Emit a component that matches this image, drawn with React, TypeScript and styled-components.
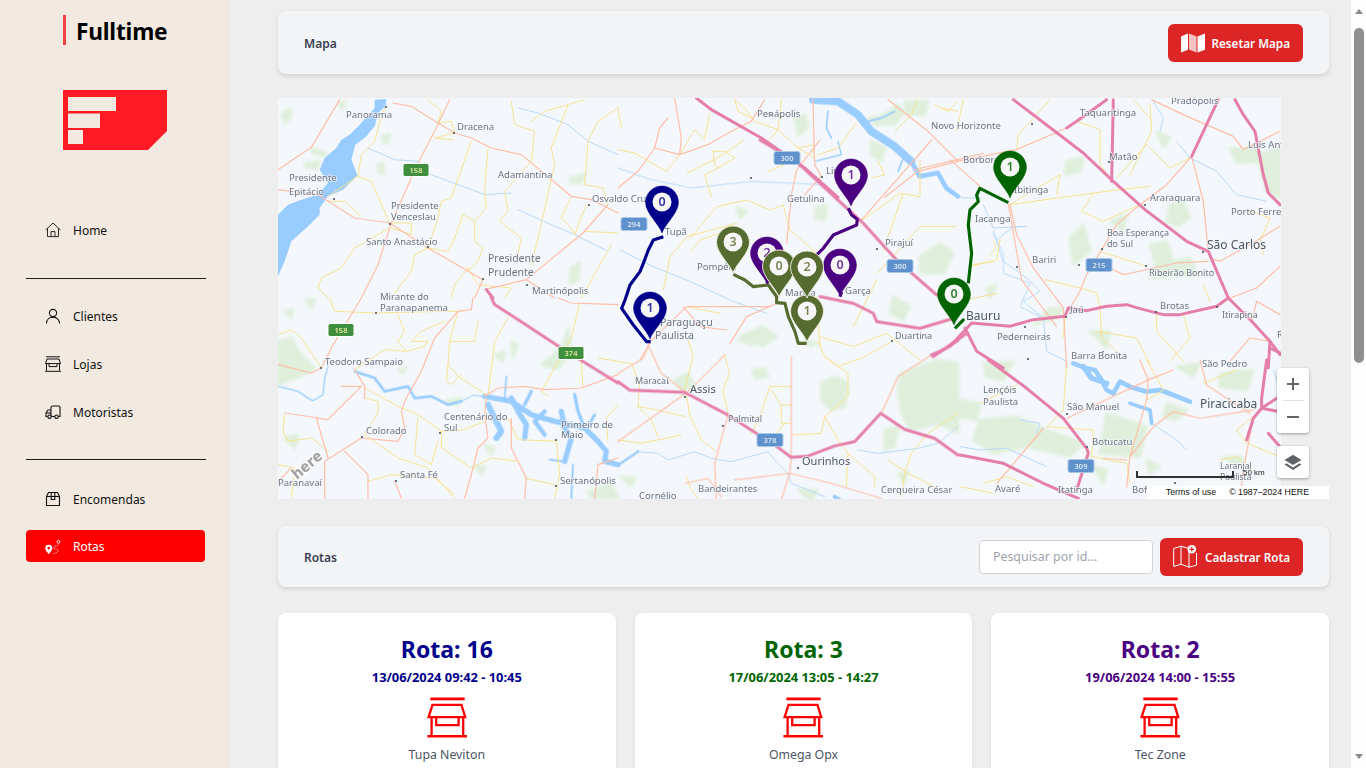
import React from "react";
import styled, { createGlobalStyle } from "styled-components";

const UI_FONT = `"Noto Sans", "Open Sans", Arial, sans-serif`;

const GlobalStyle = createGlobalStyle`
  html, body { margin: 0; padding: 0; height: 100%; overflow: hidden; }
  body { font-family: ${UI_FONT}; background: #eeeeee; }
  * { box-sizing: border-box; }
`;

//#region Styled components

const Shell = styled("div")`
  display: flex;
  height: 100vh;
  overflow: hidden;
`;

const Sidebar = styled("aside")`
  flex: 0 0 230px;
  min-width: 0;
  background: #f2e9e0;
  padding-top: 15px;
`;

const Brand = styled("div")`
  margin-left: 63px;
  height: 30px;
  padding-left: 10px;
  border-left: 3px solid #ef4444;
  font-size: 22.7px;
  line-height: 34px;
  font-weight: 700;
  letter-spacing: -0.2px;
  color: #000;
`;

const LogoWrap = styled("div")`
  margin: 45px 0 0 63px;
  height: 60px;
  line-height: 0;
`;

const NavList = styled("nav")`
  margin: 64px 25px 0 26px;
  display: flex;
  flex-direction: column;
`;

const NavItem = styled("a") <{ $active?: boolean; $gap?: number }>`
  display: flex;
  align-items: center;
  gap: 12px;
  height: 32px;
  padding-left: 19px;
  padding-top: ${(p) => (p.$active ? 1 : 0)}px;
  margin-top: ${(p) => p.$gap ?? 16}px;
  border-radius: 4px;
  font-size: 12px;
  color: ${(p) => (p.$active ? "#fff" : "#111")};
  background: ${(p) => (p.$active ? "#ff0000" : "transparent")};
  svg { flex: 0 0 16px; }
`;

const NavRule = styled("div") <{ $top: number }>`
  height: 1px;
  width: 180px;
  background: #1c1c1c;
  margin-top: ${(p) => p.$top}px;
`;

const Main = styled("main")`
  flex: 1;
  min-width: 0;
  padding: 11px 22px 0 48px;
  overflow: hidden;
`;

const Panel = styled("section")`
  display: flex;
  align-items: center;
  justify-content: space-between;
  height: 63px;
  padding: 0 26px;
  background: #f3f4f6;
  border-radius: 8px;
  box-shadow: 0 2px 4px rgba(0, 0, 0, 0.12);
`;

const RoutesPanel = styled(Panel)`
  height: 61px;
  margin-top: 27px;
`;

const PanelTitle = styled("h2")`
  margin: 1px 0 0;
  font-size: 12px;
  font-weight: 600;
  color: #374151;
`;

const PanelActions = styled("div")`
  display: flex;
  align-items: center;
  gap: 7px;
`;

const RedButton = styled("button")`
  display: flex;
  align-items: center;
  gap: 7px;
  height: 38px;
  padding: 0 13px;
  border: 0;
  border-radius: 6px;
  background: #dc2626;
  color: #fff;
  font-family: ${UI_FONT};
  font-size: 11.7px;
  font-weight: 600;
  white-space: nowrap;
`;

const SearchInput = styled("input")`
  width: 174px;
  height: 34px;
  padding: 0 13px;
  border: 1px solid #d1d5db;
  border-radius: 4px;
  background: #fff;
  font-family: ${UI_FONT};
  font-size: 12.4px;
  &::placeholder { color: #9ca3af; opacity: 1; }
`;

const MapFrame = styled("div")`
  position: relative;
  height: 401px;
  margin-top: 24px;
`;

const MapCanvas = styled("div")`
  width: 1003px;
  height: 401px;
  background: #f4f8fc;
  overflow: hidden;
  line-height: 0;
`;

const ZoomBox = styled("div")`
  position: absolute;
  left: 999px;
  top: 270px;
  width: 32px;
  height: 65px;
  background: #fff;
  border-radius: 3px;
  box-shadow: 0 1px 3px rgba(0, 0, 0, 0.35);
  display: flex;
  flex-direction: column;
  align-items: center;
`;

const ZoomButton = styled("div")`
  flex: 1;
  width: 100%;
  display: flex;
  align-items: center;
  justify-content: center;
`;

const ZoomSeparator = styled("div")`
  width: 21px;
  height: 1px;
  background: #e3e3e3;
`;

const LayerButton = styled("div")`
  position: absolute;
  left: 999px;
  top: 348px;
  width: 32px;
  height: 32px;
  background: #fff;
  border-radius: 3px;
  box-shadow: 0 1px 3px rgba(0, 0, 0, 0.35);
  display: flex;
  align-items: center;
  justify-content: center;
`;

const ScaleBar = styled("div")`
  position: absolute;
  left: 858px;
  top: 373px;
  width: 98px;
  height: 7px;
  border: 2px solid #333;
  border-top: 0;
`;

const ScaleLabel = styled("span")`
  position: absolute;
  left: 965px;
  top: 370px;
  font-family: "Liberation Sans", Arial, sans-serif;
  font-size: 8px;
  line-height: 10px;
  color: #222;
`;

const Attribution = styled("div")`
  position: absolute;
  right: 0;
  bottom: 0;
  width: 182px;
  height: 13px;
  display: flex;
  justify-content: flex-end;
  gap: 13px;
  padding-right: 20px;
  background: #fff;
  font-family: "Liberation Sans", Arial, sans-serif;
  font-size: 8.8px;
  line-height: 13px;
  color: #111;
  white-space: nowrap;
`;

const CardGrid = styled("div")`
  display: grid;
  grid-template-columns: repeat(3, 1fr);
  gap: 19px;
  margin-top: 26px;
`;

const RouteCard = styled("article")`
  height: 190px;
  padding-top: 20px;
  background: #fff;
  border-radius: 8px;
  box-shadow: 0 2px 4px rgba(0, 0, 0, 0.08);
  text-align: center;
`;

const RouteTitle = styled("h3") <{ $color: string }>`
  margin: 0;
  font-size: 23px;
  line-height: 32px;
  font-weight: 700;
  color: ${(p) => p.$color};
`;

const RouteTime = styled("div") <{ $color: string }>`
  margin-top: 2px;
  font-size: 12.9px;
  line-height: 20px;
  font-weight: 700;
  color: ${(p) => p.$color};
`;

const StoreWrap = styled("div")`
  margin-top: 10px;
  height: 42px;
  line-height: 0;
`;

const ShopName = styled("div")`
  margin-top: 7px;
  font-size: 12.3px;
  line-height: 18px;
  color: #4b5563;
`;

const FakeScrollbar = styled("div")`
  flex: 0 0 15px;
  display: flex;
  flex-direction: column;
  align-items: center;
  background: #fdfdfd;
`;

const ScrollArrow = styled("div") <{ $down?: boolean }>`
  flex: 0 0 auto;
  width: 0;
  height: 0;
  margin: ${(p) => (p.$down ? "auto 0 9px" : "9px 0 0")};
  border-left: 4.5px solid transparent;
  border-right: 4.5px solid transparent;
  ${(p) =>
    p.$down ? "border-top: 5px solid #8a8a8a;" : "border-bottom: 5px solid #8a8a8a;"}
`;

const ScrollThumb = styled("div")`
  width: 10px;
  height: 335px;
  margin-top: 14px;
  border-radius: 5px;
  background: #8f8f8f;
`;
//#endregion

//#region Icons

const HomeIcon = () => (
  <svg width="16" height="16" viewBox="0 0 16 16" fill="none" stroke="#2a2a2a" strokeWidth="1">
    <path d="M0.6 8 8 1l7.4 7" />
    <path d="M2.5 6.4v8.2h11V6.4" />
    <path d="M6 14.6V9.6h4v5" />
  </svg>
);

const UserIcon = () => (
  <svg width="16" height="16" viewBox="0 0 16 16" fill="none" stroke="#111" strokeWidth="1.1">
    <circle cx="8" cy="5" r="3.6" />
    <path d="M1.5 15.5c0-4 2.8-6.4 6.5-6.4s6.5 2.4 6.5 6.4" />
  </svg>
);

const ShopIcon = () => (
  <svg width="16" height="16" viewBox="0 0 16 16" fill="none" stroke="#111" strokeWidth="1">
    <path d="M1 0.8h14" />
    <path d="M2 3h12l1.5 4.6H.5z" />
    <path d="M1.5 7.6v7M14.5 7.6v7M0 15.3h16" />
    <path d="M4 7.6v3h8v-3" />
  </svg>
);

const TruckIcon = () => (
  <svg width="16" height="16" viewBox="0 0 16 16" fill="none" stroke="#111" strokeWidth="1.1">
    <path d="M6 12V3.5A1.5 1.5 0 0 1 7.5 2h6A1.5 1.5 0 0 1 15 3.5V12.5h-1.5" />
    <path d="M9.5 12.5H6.5" />
    <path d="M2.5 12.5H1V9l2-3h3" />
    <path d="M1.5 9H6" />
    <circle cx="4.5" cy="12.7" r="1.7" />
    <circle cx="11.5" cy="12.7" r="1.7" />
  </svg>
);

const BoxIcon = () => (
  <svg width="16" height="16" viewBox="0 0 16 16" fill="none" stroke="#111" strokeWidth="1.1">
    <path d="M1.5 5.5 3.5 1.5h9l2 4v9h-13z" />
    <path d="M1.5 5.5h13" />
    <path d="M6.2 1.5v7h3.6v-7" />
  </svg>
);

const RouteIcon = () => (
  <svg width="17" height="16" viewBox="0 0 17 16" fill="none">
    <path
      fillRule="evenodd"
      d="M4 5.5a3.7 3.7 0 0 1 3.7 3.7c0 2.3-2.3 4.5-3.7 6.3C2.6 13.7.3 11.5.3 9.2A3.7 3.7 0 0 1 4 5.5zm0 2.3a1.4 1.4 0 1 0 0 2.8 1.4 1.4 0 0 0 0-2.8z"
      fill="#fff"
    />
    <circle cx="14.3" cy="2.5" r="1.5" stroke="#fff" strokeWidth="1" />
    <path
      d="M14 5.5c-.3 2-5 1.5-5 3.3 0 1.5 5.3 1 5 3.2-.2 1.8-4 3-6 3.2"
      stroke="#fff"
      strokeWidth="1"
      strokeDasharray="1.2 1.3"
    />
  </svg>
);

const MapSolidIcon = () => (
  <svg width="24" height="20" viewBox="0 0 24 20" fill="#fff">
    <path d="M0 3.5 7 .5v16.3L0 19.6z" />
    <path d="M8 .5l7.5 3v16l-7.5-3z" opacity="0.72" />
    <path d="M16.5 3.5 24 .4v16.3l-7.5 2.9z" />
  </svg>
);

const MapAddIcon = () => (
  <svg width="25" height="23" viewBox="0 0 25 23" fill="none" stroke="#fff" strokeWidth="1">
    <path d="M.7 3.5 8 1.2l8 2.3" />
    <path d="M.7 3.5v18l7.3-2.3 8 3 7.5-2V8" />
    <path d="M8 1.2v18M16 5v17.2" />
    <circle cx="18.8" cy="4.3" r="4.3" fill="#fff" stroke="none" />
    <path d="M18.8 2v4.6M16.5 4.3h4.6" stroke="#dc2626" strokeWidth="1.2" />
  </svg>
);

const StoreIcon = () => (
  <svg width="40" height="41" viewBox="0 0 40 41" fill="none" stroke="#ff0000" strokeWidth="2.3">
    <path d="M3.3 1.8h34.4" strokeWidth="2.7" />
    <path d="M5.5 7.8h29l3.7 12.3H1.6z" />
    <path d="M4.6 20v19M36.2 20v19" />
    <path d="M9.2 20v8.1h22.4V20" />
    <path d="M.4 39.3h39.8" strokeWidth="2.6" />
  </svg>
);

const LayersIcon = () => (
  <svg width="18" height="17" viewBox="0 0 18 17">
    <path d="M9 .8 17.5 6 9 11 .5 6z" fill="#5f6368" />
    <path d="M2.5 9.3.5 10.5 9 16l8.5-5.5-2-1.2L9 13.5z" fill="#5f6368" />
  </svg>
);

const Logo = () => (
  <svg width="104" height="60" viewBox="0 0 104 60">
    <path d="M0 0h104v41L85 60H0z" fill="#ff1a26" />
    <path d="M5 7h48v14H5zM5 23.5h32V38H5zM5 40h15v14H5z" fill="#f2e9e0" />
  </svg>
);
//#endregion

//#region Map data

// Traced in 3x crop coordinates, each tile has its own origin.
type Tile = {
  o: [number, number];
  green?: string[];
  lake?: string[];
  water?: [string, number][];
  river?: string[];
  yellow?: string[];
  orange?: string[];
  pink?: string[];
};

const tiles: Tile[] = [
  {
    o: [278, 98],
    green: [
      "12,50 35,30 40,55 20,75",
      "300,200 315,195 318,225 303,225",
      "312,115 335,110 330,135 315,135",
      "875,240 920,230 910,255 880,258",
      "880,510 905,495 900,550 875,555",
      "80,195 125,190 120,210 85,210",
      "100,150 145,165 140,175 105,165",
      "180,15 205,10 195,35",
    ],
    lake: [
      "290,5 325,3 322,25 300,45 290,85 262,118 232,140 220,185 238,232 195,275 150,295 125,330 125,350 85,390 40,430 20,490 0,535 0,350 30,320 70,305 120,290 150,255 125,215 140,180 175,150 190,125 215,110 245,80 290,30",
    ],
    river: [
      "270,150 350,185 420,190 460,230 540,260 620,290 700,285",
      "720,335 830,385 880,405 990,460",
      "720,30 780,45 870,80 930,130 1020,170",
    ],
    yellow: [
      "320,30 300,90 290,130 250,170 240,235 280,250 335,375",
      "240,235 150,295",
      "580,130 520,300 490,310 480,360 460,420 450,450",
      "630,150 620,280 625,330 590,370 590,430 615,450 600,490 570,520",
      "555,350 590,370",
      "555,350 530,420 510,460 450,450",
      "340,375 400,375 400,410 340,390",
      "410,470 400,520 340,600",
      "450,450 410,470",
      "230,450 190,510 130,540 120,570 150,600",
      "335,390 230,450",
      "700,10 710,80 770,100 760,190 680,280 690,340 665,370 730,420 720,470",
      "920,5 800,40 760,70",
      "870,20 820,150 830,200 785,400 760,500",
      "1020,30 960,70 930,130 920,260 975,270 990,320 920,400 1020,405",
      "850,360 880,390 890,410 925,320",
      "880,295 850,360",
      "1000,440 910,600",
      "480,75 520,70 530,105 470,120 525,125",
      "150,310 200,310 250,355",
      "570,510 530,560 520,600",
      "570,510 600,560 700,570 680,600",
      "450,5 490,40 480,75",
    ],
    orange: [
      "0,215 100,148 185,5",
      "345,15 400,25 480,75 530,105 580,120 640,150 730,170 790,220 880,295 940,305 1020,345",
      "515,5 470,100 420,195 340,375 300,500 250,600",
      "0,275 120,290 230,360 335,375 450,450 615,545 590,600",
      "620,575 745,545 915,405 990,320",
      "745,545 830,600",
    ],
    pink: ["625,575 645,600"],
  },
  {
    o: [278, 298],
    green: [
      "0,130 40,120 70,170 110,210 90,225 0,260",
      "85,5 110,5 100,30",
      "20,40 45,35 40,60",
      "790,200 850,150 870,90 880,150 840,215",
      "650,170 680,160 675,190",
      "500,310 550,300 540,320",
      "590,505 620,505 610,530",
      "620,440 650,450 640,470",
      "360,215 385,210 375,225",
      "700,130 720,140 705,180",
      "20,420 60,410 50,450",
      "930,580 1000,560 1020,600 940,600",
    ],
    water: [
      ["0,265 60,280 90,300 105,308 135,290 140,240 150,205", 4],
      ["230,220 290,240 320,280 390,265 410,300 460,295 510,320 550,310", 8],
      ["550,310 585,292 620,295", 3],
      ["620,295 700,310 760,350 830,370 920,390 960,430 985,460 980,490 1020,500", 16],
      ["630,320 650,360 670,400 655,420", 18],
      ["700,300 720,340 745,380 740,420", 16],
      ["760,280 740,320", 10],
      ["800,340 770,370 800,410", 13],
      ["850,340 860,390 880,420 860,490", 16],
      ["890,290 900,340 920,390", 10],
      ["950,350 930,385", 9],
      ["685,235 680,300", 5],
      ["885,500 880,600", 6],
      ["815,485 860,490", 6],
    ],
    yellow: [
      "155,0 170,40 290,45 500,40 540,40",
      "360,50 380,100 360,130 385,160 440,145 450,130 400,130 430,100 500,70",
      "0,110 40,95 70,120 130,210",
      "230,215 320,155 380,160",
      "540,40 515,130 510,200 540,235 580,260 625,290",
      "600,70 590,130 515,130",
      "510,200 505,250 520,260 550,230",
      "690,60 650,130 630,290",
      "20,350 15,400 30,430 100,420 150,460",
      "260,300 300,310 300,345 260,410",
      "260,270 370,330 420,350 490,400 560,395 620,370",
      "490,400 490,450 580,510 640,480 720,490",
      "420,360 410,470 460,500 480,430",
      "260,410 360,480 450,510 530,600",
      "910,190 915,265",
      "905,15 880,120 790,280 810,295",
      "835,430 720,425 690,360",
      "835,430 845,530 830,600",
      "740,540 830,560",
      "270,550 340,530 470,540 530,590",
      "960,180 1020,190",
      "1020,320 985,360 990,430",
      "0,500 50,510 40,600",
    ],
    orange: [
      "250,0 160,150 130,210 100,225 0,200",
      "585,0 580,35 540,40 470,120 430,220 380,310 370,340 380,390 360,430 250,420 140,490 140,600",
      "190,265 250,265 150,365 115,360 150,480",
      "120,360 20,345",
      "230,215 260,265 260,300",
      "40,510 0,550",
      "200,460 270,530 270,600",
      "625,300 620,350 630,420 600,450 580,530 560,600",
      "620,295 660,270 740,265 800,275 910,270 1020,230",
      "840,0 880,15 1020,20",
      "700,360 700,450 745,540 740,600",
      "350,550 370,600",
      "1020,480 960,500 950,600",
    ],
    pink: ["640,0 650,20 720,65 850,150 1020,255"],
  },
  {
    o: [618, 98],
    green: [
      "530,60 560,50 570,90 540,115",
      "750,60 800,50 840,20 860,40 830,80 770,80",
      "760,130 800,150 790,190 760,170",
      "860,10 930,10 920,50 870,50",
    ],
    water: [
      ["585,5 660,10 720,50 760,100 830,145 880,190", 24],
      ["880,190 905,235 960,225 985,270 1020,295", 14],
      ["630,40 625,90 640,120", 5],
      ["660,130 670,170 590,190", 4],
      ["830,40 790,60 750,70", 5],
      ["860,170 840,220", 5],
    ],
    river: ["0,210 100,245 220,270 400,250 620,260"],
    yellow: [
      "350,5 380,30 410,70 480,95 540,150 590,180",
      "490,5 480,95 450,130",
      "275,50 260,120",
      "0,155 50,165 145,220 185,170 230,95 260,125",
      "285,160 320,160 350,180 300,210 260,230 280,298",
      "285,160 290,200 300,210",
      "450,220 500,200 540,180",
      "540,150 590,140 585,165",
      "600,170 660,150 715,75",
      "780,190 800,230 760,240",
      "830,100 880,50 900,5",
      "1020,10 990,40 950,20",
      "0,30 10,90",
      "350,5 360,40 400,60",
      "970,30 1020,40",
    ],
    orange: [
      "170,0 190,120 185,170",
      "150,60 125,90 110,150 60,220 0,270",
      "440,5 400,70 340,100 270,140 185,170 110,150",
      "585,5 590,200 610,235 560,290",
      "810,5 930,100 1020,190",
      "800,298 900,220 1020,190",
    ],
    pink: ["235,0 280,35 430,120 560,210 660,298"],
  },
  {
    o: [620, 140],
    green: [
      "590,200 620,195 615,240 585,235",
      "350,200 380,215 360,235",
      "900,350 960,310 1000,340 970,400 900,400",
      "820,470 870,500 850,540 810,520",
      "360,590 430,560 470,590 430,620",
    ],
    river: [
      "0,330 100,380 200,420 330,480 440,520",
      "1130,300 1180,260 1220,260",
      "1120,280 1150,340 1150,400 1230,430 1200,500 1260,530",
    ],
    yellow: [
      "210,295 290,200 380,180 450,210 490,195",
      "490,195 510,270 590,340",
      "200,100 280,60 330,30 370,0",
      "720,245 840,160 900,170 900,60",
      "790,330 850,160",
      "770,400 800,370 900,260 1010,260",
      "770,420 730,500 700,560",
      "350,250 200,290 150,350 130,450",
      "590,470 600,620",
      "600,590 700,620 800,580 900,660",
      "1050,380 1130,360 1140,300",
      "1040,480 1130,460",
      "200,500 300,520",
      "300,280 240,300 210,335",
    ],
    orange: [
      "500,310 515,160 530,90 600,0",
      "720,245 935,0",
      "880,90 1090,40",
      "1165,190 1205,420 1310,560",
      "85,610 200,500 450,500",
      "190,500 240,560 320,570",
      "330,610 380,530 470,490",
      "90,610 60,660",
    ],
    pink: [
      "420,0 530,65 670,195 730,250 830,360 950,465",
      "600,470 700,490 760,520 770,545 900,565 1000,535",
      "940,650 1040,580",
    ],
  },
  {
    o: [618, 340],
    green: [
      "850,100 960,60 1020,70 1020,280 960,250 880,270 850,220 840,150",
      "610,130 650,110 690,130 680,200 640,210 610,180",
      "405,90 440,85 450,110 410,115",
      "170,120 210,100 230,140 190,150",
      "800,270 840,260 830,320 800,330",
      "360,0 420,0 400,15",
      "560,0 600,10 575,20",
      "10,410 50,415 40,440",
      "540,450 600,450 580,480",
      "840,400 870,400 860,430",
    ],
    water: [
      ["0,375 30,355 60,335", 7],
      ["650,470 665,480", 12],
    ],
    river: [
      "720,330 780,340 900,325 960,310 1020,260",
      "60,335 120,340 150,360 230,335 280,355 340,365 450,335 470,360 510,400 520,430 620,470",
    ],
    yellow: [
      "0,65 40,70 65,130 60,200 100,240 120,290",
      "205,160 215,225 250,300 295,335",
      "210,0 225,50 200,150",
      "320,45 335,100 315,150 330,220",
      "455,140 430,220 400,280",
      "455,140 520,140",
      "460,150 490,195 490,250 520,250",
      "490,195 520,195",
      "520,285 610,280 620,230 660,300 690,340 770,410 770,440",
      "620,230 690,170 690,100 620,50 660,80 740,50 820,5",
      "690,340 685,440",
      "810,360 870,400 950,440",
      "1020,220 930,280 880,340 860,400 850,470",
      "0,300 70,310 190,285",
      "200,230 120,210 60,200",
      "205,410 220,450 240,475",
      "470,285 500,250",
      "600,5 620,50",
    ],
    orange: [
      "90,15 130,100 200,155",
      "320,45 210,155 0,305",
      "0,100 75,55 90,20",
      "330,225 290,370 295,480",
      "520,50 520,350 515,400 490,480",
      "200,430 270,415 310,470",
      "350,420 515,400 640,430 790,475",
      "790,220 840,110 940,45",
    ],
    pink: [
      "0,125 35,150 200,157 330,225 470,315 520,352 570,348 650,318 710,305 788,220 860,268 950,295 1020,345",
      "940,45 985,25 1020,0",
    ],
  },
  {
    o: [950, 98],
    green: [
      "660,320 700,310 720,360 680,385 650,370",
      "840,150 920,150 930,190 860,195",
      "920,170 990,150 990,300 950,280",
      "600,440 650,430 670,490 620,510",
      "350,190 400,180 390,220 345,230",
      "360,420 400,380 420,460 370,500",
      "620,100 660,120 640,150",
      "480,370 530,350 520,400",
      "110,570 140,560 120,600",
      "300,630 340,630 320,660 250,680",
      "620,500 720,480 740,530 600,540",
      "420,700 480,700 470,750",
    ],
    river: [
      "0,285 40,300 95,300",
      "100,320 130,390 225,385",
      "130,400 160,490 230,540 270,580 220,610 280,660 290,760 350,790",
      "680,130 720,180 800,220 860,290 950,310",
      "610,10 640,60 630,100",
    ],
    yellow: [
      "180,320 430,285 510,275 600,265",
      "430,285 395,340 460,370 570,320",
      "500,240 590,140 660,210 720,180",
      "380,70 450,95 450,200 480,240",
      "300,5 205,110 200,155",
      "330,230 320,290",
      "180,320 330,230",
      "70,500 130,490",
      "450,460 590,505",
      "285,545 390,570 440,585 450,630 455,720 510,770",
      "620,650 620,700 700,790",
      "760,560 780,610",
      "345,660 340,720",
      "600,20 605,100 540,230",
      "40,5 20,100",
      "130,430 140,450 120,470",
      "550,5 600,60",
      "900,340 960,360 930,430 940,470",
      "440,700 560,720 600,800",
      "700,650 720,720 660,790",
    ],
    orange: [
      "0,185 90,265",
      "180,320 200,410 250,510 340,630 350,810",
      "350,90 200,155 20,190",
      "725,175 650,260 570,320 500,380 455,455 410,530 390,580 345,655",
      "725,175 760,310 775,460",
      "780,480 810,490 900,440 990,385",
      "480,510 520,530 680,495 775,490",
      "605,5 700,50 850,115 880,155 990,100",
      "840,600 920,570 990,505",
      "905,670 920,610 990,650",
      "960,730 900,720 840,790",
    ],
    pink: [
      "190,5 400,165 490,250 585,335 710,430 775,460 835,600 905,670 960,730 990,770",
      "490,5 485,250",
      "805,5 725,175",
      "855,5 880,50 915,100 940,230 955,285 990,320",
      "355,630 410,638 470,625 530,620 570,632 640,650 690,650 800,625 835,600",
      "0,745 65,675 180,685 250,665 345,655 355,630",
      "45,690 80,760 160,810",
      "960,730 955,810",
      "960,750 1000,770",
      "470,5 380,70 350,90",
    ],
  },
  {
    o: [960, 360],
    green: [
      "60,180 170,170 260,210 370,250 330,290 200,260 100,280 40,240",
      "0,120 60,130 50,180 0,170",
      "70,10 160,5 130,60 80,50",
      "620,130 680,150 650,180 610,170",
      "440,160 560,200 540,290 420,280",
      "400,320 440,330 430,370",
      "560,300 600,320 570,340",
      "650,20 720,10 700,50",
      "780,40 880,30 860,90 780,80",
      "790,290 850,290 830,320",
    ],
    water: [
      ["340,10 380,25 405,30 425,60 440,90 460,100 480,65 510,80 560,95 600,90 640,105 690,125", 14],
      ["370,20 395,55 440,70", 16],
      ["510,130 540,140 570,150 575,190", 11],
    ],
    river: [
      "575,190 650,240 680,270",
      "0,260 60,270 140,265 260,320",
      "180,180 240,190 230,220",
      "940,30 950,60",
    ],
    yellow: [
      "320,0 310,150 260,200 400,210 395,290",
      "560,120 610,90 560,0",
      "730,70 830,30",
      "880,170 830,210 860,250 960,290",
      "500,310 510,370",
      "780,300 830,290 880,330",
      "60,130 170,75",
      "70,370 140,350 220,380",
      "395,290 500,310",
      "0,380 100,400",
    ],
    orange: [
      "540,0 565,60 560,120 510,290 500,380",
      "320,175 565,60",
      "565,60 640,30",
      "510,290 580,200 640,155 720,175 880,150",
      "500,300 430,295",
      "880,175 850,330 840,417",
      "720,0 740,75 870,160",
      "250,205 170,300 110,370",
    ],
    pink: [
      "85,0 200,85 310,175 380,265 385,280 350,390",
      "0,285 130,310 250,370 355,415",
      "920,0 905,115 905,145 880,175 860,240",
      "905,145 950,115",
      "905,145 960,155",
      "925,220 960,260",
    ],
  },
];

type Label = [string, number, number, number?];

const labels: Label[] = [
  ["Panorama", 346, 118],
  ["Dracena", 457, 130],
  ["Novo Horizonte", 931, 129],
  ["Penápolis", 757, 117],
  ["Pradópolis", 1171, 104],
  ["Taquaritinga", 1080, 116],
  ["Presidente", 289, 181],
  ["Epitácio", 289, 195],
  ["Adamantina", 498, 178],
  ["Osvaldo Cruz", 592, 202],
  ["Getulina", 787, 202],
  ["Lins", 826, 174],
  ["Borborema", 963, 163],
  ["Matão", 1109, 160],
  ["Luís Antô", 1248, 148],
  ["Araraquara", 1150, 201],
  ["Ibitinga", 1014, 193],
  ["Iacanga", 975, 222],
  ["Presidente", 391, 209],
  ["Venceslau", 391, 220],
  ["Santo Anastácio", 366, 245],
  ["Tupã", 665, 235],
  ["Pirajuí", 885, 246],
  ["Pompéia", 697, 270],
  ["Presidente", 488, 262, 10.5],
  ["Prudente", 488, 276, 10.5],
  ["Martinópolis", 532, 294],
  ["Boa Esperança", 1107, 236, 9],
  ["do Sul", 1107, 247, 9],
  ["São Carlos", 1207, 249, 12],
  ["Porto Ferreira", 1231, 215],
  ["Bariri", 1032, 263],
  ["Ribeirão Bonito", 1149, 276, 9],
  ["Jaú", 1070, 313],
  ["Brotas", 1160, 309],
  ["Garça", 845, 294],
  ["Marília", 785, 296],
  ["Bauru", 966, 320, 12],
  ["Duartina", 895, 339, 9],
  ["Pederneiras", 997, 340],
  ["Itirapina", 1222, 318, 9],
  ["Rio Claro", 1277, 338],
  ["Barra Bonita", 1071, 359],
  ["São Pedro", 1202, 367],
  ["Mirante do", 380, 300],
  ["Paranapanema", 380, 311],
  ["Teodoro Sampaio", 325, 365],
  ["Paraguaçu", 660, 326, 10.5],
  ["Paulista", 655, 339, 10.5],
  ["Maracaí", 635, 384, 9],
  ["Assis", 690, 393, 11],
  ["Lençóis", 983, 393],
  ["Paulista", 983, 405],
  ["São Manuel", 1067, 410],
  ["Piracicaba", 1200, 408, 12],
  ["Botucatu", 1092, 445],
  ["Centenário do", 444, 420],
  ["Sul", 444, 431],
  ["Colorado", 366, 434],
  ["Primeiro de", 561, 428],
  ["Maio", 561, 438],
  ["Palmital", 728, 422, 9],
  ["Santa Fé", 400, 478],
  ["Ourinhos", 802, 465, 11],
  ["Sertanópolis", 560, 484],
  ["Bandeirantes", 698, 492],
  ["Cornélio", 639, 499],
  ["Cerqueira César", 881, 493],
  ["Avaré", 995, 492],
  ["Itatinga", 1058, 493],
  ["Bofete", 1132, 493],
  ["Laranjal", 1220, 469, 8.5],
  ["Paulista", 1220, 480, 8.5],
  ["Paranavaí", 278, 486],
];

const dots: [number, number][] = [
  [386, 107], [454, 133], [334, 199], [390, 224], [428, 247], [483, 279], [527, 285],
  [589, 205], [771, 115], [751, 178], [822, 177], [877, 249], [668, 383], [685, 397],
  [723, 426], [798, 468], [1032, 124], [1109, 162], [1145, 205], [1102, 249], [1203, 252],
  [1146, 266], [1079, 265], [1017, 267], [1066, 317], [1156, 312], [1217, 307], [1025, 327],
  [892, 341], [1028, 359], [1103, 352], [1255, 408], [1067, 414], [1087, 447], [1175, 483],
  [376, 313], [321, 368], [362, 437], [440, 433], [396, 481], [556, 440], [556, 486], [996, 505],
];

type Shield = [string, number, number, "g" | "b"];

const shields: Shield[] = [
  ["158", 416, 170, "g"],
  ["158", 341, 330, "g"],
  ["374", 571, 353, "g"],
  ["294", 634, 224, "b"],
  ["300", 787, 158, "b"],
  ["300", 900, 266, "b"],
  ["215", 1099, 265, "b"],
  ["378", 770, 440, "b"],
  ["309", 1081, 466, "b"],
];

type Pin = [number, number, string, string, boolean?];

const NAVY = "#00008b";
const PURPLE = "#4b0082";
const OLIVE = "#556b2f";
const GREEN = "#006400";

const pins: Pin[] = [
  [662, 233, NAVY, "0"],
  [650, 339, NAVY, "1"],
  [851, 206, PURPLE, "1"],
  [733, 273, OLIVE, "3", true],
  [767, 284, PURPLE, "2"],
  [840, 296, PURPLE, "0"],
  [807, 342, OLIVE, "1", true],
  [779, 297, OLIVE, "0", true],
  [807, 298, OLIVE, "2", true],
  [954, 325, GREEN, "0"],
  [1010, 198, GREEN, "1"],
];

const routes: [string, string][] = [
  [NAVY, "130,290 100,300 85,330 70,370 60,395 30,435 15,480 5,505 40,555 80,605 92,605"],
  [PURPLE, "685,205 695,225 712,238 710,255 640,285 610,325 590,345"],
  [PURPLE, "440,430 470,385"],
  [PURPLE, "660,470 665,455"],
  [OLIVE, "340,403 375,420 400,440 445,435 470,470 470,488 495,490 505,530 525,575 535,610 560,610"],
  [GREEN, "1165,188 1080,145 1070,165 1075,185 1050,210 1045,255 1055,340 1045,430"],
  [GREEN, "1005,565 1030,540 1020,550"],
];
//#endregion

const MapDrawing: React.FC = () => {
  const tileGroup = (t: Tile, body: React.ReactNode, key: number) => (
    <g key={key} transform={`translate(${t.o[0]} ${t.o[1]}) scale(0.3333)`}>
      {body}
    </g>
  );
  const strokeLayer = (
    pick: (t: Tile) => string[] | undefined,
    color: string,
    width: number
  ) =>
    tiles.map((t, i) =>
      tileGroup(
        t,
        (pick(t) || []).map((p, j) => (
          <polyline
            key={j}
            points={p}
            fill="none"
            stroke={color}
            strokeWidth={width}
            strokeLinejoin="round"
            strokeLinecap="round"
          />
        )),
        i
      )
    );

  return (
    <svg width="1003" height="401" viewBox="278 98 1003 401">
      <g style={{ filter: "blur(1.6px)" }}>
        {tiles.map((t, i) =>
          tileGroup(
            t,
            (t.green || []).map((p, j) => (
              <polygon key={j} points={p} fill="#dfefdb" stroke="#dfefdb" strokeWidth="8" strokeLinejoin="round" />
            )),
            i
          )
        )}
      </g>
      <g style={{ filter: "blur(0.4px)" }}>
        {strokeLayer((t) => t.river, "#b9d9fa", 3)}
        {tiles.map((t, i) =>
          tileGroup(
            t,
            <>
              {(t.lake || []).map((p, j) => (
                <polygon key={j} points={p} fill="#99ccff" />
              ))}
              {(t.water || []).map(([p, w], j) => (
                <polyline key={j} points={p} fill="none" stroke="#99ccff" strokeWidth={w} strokeLinejoin="round" strokeLinecap="round" />
              ))}
            </>,
            i
          )
        )}
        {strokeLayer((t) => t.yellow, "#f6e38f", 3)}
        {strokeLayer((t) => t.orange, "#ffbea6", 3.6)}
        {strokeLayer((t) => t.pink, "#e57fa9", 9)}

        {dots.map(([x, y], i) => (
          <circle key={i} cx={x} cy={y} r="1.1" fill="#4b5563" />
        ))}

        {shields.map(([n, x, y, kind], i) => (
          <g key={i}>
            <rect x={x - 13} y={y - 6.5} width="26" height="13" rx="2" fill={kind === "g" ? "#3f8f3f" : "#5f92cc"} stroke={kind === "g" ? "#fff" : "#a9c6e4"} strokeWidth="1" />
            <text x={x} y={y + 3} textAnchor="middle" fontFamily={UI_FONT} fontSize="7.5" fontWeight="600" fill={kind === "g" ? "#dfe89a" : "#dbe7f3"}>
              {n}
            </text>
          </g>
        ))}

        {labels.map(([text, x, y, size], i) => (
          <text
            key={i}
            x={x}
            y={y}
            fontFamily={UI_FONT}
            fontSize={size ?? 9.5}
            fill={size && size >= 11 ? "#4b5563" : "#6b7280"}
            stroke="#f6f9fc"
            strokeWidth="1.5"
            strokeOpacity="0.8"
            style={{ paintOrder: "stroke" }}
          >
            {text}
          </text>
        ))}

        <text
          transform="translate(297 480) rotate(-40)"
          fontFamily={UI_FONT}
          fontSize="15"
          fontWeight="800"
          fill="#a3a3a3"
          stroke="#fff"
          strokeWidth="2"
          style={{ paintOrder: "stroke" }}
        >
          here
        </text>
      </g>

      <g transform="translate(620 140) scale(0.3333)">
        {routes.map(([c, p], i) => (
          <polyline key={i} points={p} fill="none" stroke={c} strokeWidth="9.5" strokeLinejoin="round" />
        ))}
      </g>

      {pins.map(([x, y, color, n, halo], i) => (
        <g key={i} transform={`translate(${x} ${y})`}>
          <path
            d="M0 0C-3-9-16.5-20-16.5-30.5A16.5 16.5 0 0 1 16.5-30.5C16.5-20 3-9 0 0z"
            fill={color}
            stroke={halo ? "#e8ead8" : color}
            strokeWidth={halo ? 1 : 0.5}
          />
          <circle cy="-31" r="9.5" fill="#f7f7f7" />
          <text y="-27" textAnchor="middle" fontFamily={UI_FONT} fontSize="12.5" fontWeight="600" fill={color} opacity="0.8">
            {n}
          </text>
        </g>
      ))}
    </svg>
  );
};

const cards = [
  { id: 16, when: "13/06/2024 09:42 - 10:45", shop: "Tupa Neviton", color: NAVY },
  { id: 3, when: "17/06/2024 13:05 - 14:27", shop: "Omega Opx", color: GREEN },
  { id: 2, when: "19/06/2024 14:00 - 15:55", shop: "Tec Zone", color: PURPLE },
];

const App: React.FC = () => {
  return (
    <Shell>
      <GlobalStyle />
      <Sidebar>
        <Brand>Fulltime</Brand>
        <LogoWrap>
          <Logo />
        </LogoWrap>
        <NavList>
          <NavItem $gap={0}>
            <HomeIcon />
            Home
          </NavItem>
          <NavRule $top={32} />
          <NavItem $gap={21}>
            <UserIcon />
            Clientes
          </NavItem>
          <NavItem>
            <ShopIcon />
            Lojas
          </NavItem>
          <NavItem>
            <TruckIcon />
            Motoristas
          </NavItem>
          <NavRule $top={31} />
          <NavItem $gap={23}>
            <BoxIcon />
            Encomendas
          </NavItem>
          <NavItem $active $gap={15}>
            <RouteIcon />
            Rotas
          </NavItem>
        </NavList>
      </Sidebar>

      <Main>
        <Panel>
          <PanelTitle>Mapa</PanelTitle>
          <RedButton>
            <MapSolidIcon />
            Resetar Mapa
          </RedButton>
        </Panel>

        <MapFrame>
          <MapCanvas>
            <MapDrawing />
          </MapCanvas>
          <ScaleBar />
          <ScaleLabel>50 km</ScaleLabel>
          <ZoomBox>
            <ZoomButton>
              <svg width="14" height="14" viewBox="0 0 14 14" stroke="#666" strokeWidth="2">
                <path d="M7 1v12M1 7h12" />
              </svg>
            </ZoomButton>
            <ZoomSeparator />
            <ZoomButton>
              <svg width="14" height="14" viewBox="0 0 14 14" stroke="#666" strokeWidth="2">
                <path d="M1 7h12" />
              </svg>
            </ZoomButton>
          </ZoomBox>
          <LayerButton>
            <LayersIcon />
          </LayerButton>
          <Attribution>
            <span>Terms of use</span>
            <span>© 1987–2024 HERE</span>
          </Attribution>
        </MapFrame>

        <RoutesPanel>
          <PanelTitle>Rotas</PanelTitle>
          <PanelActions>
            <SearchInput placeholder="Pesquisar por id..." />
            <RedButton>
              <MapAddIcon />
              Cadastrar Rota
            </RedButton>
          </PanelActions>
        </RoutesPanel>

        <CardGrid>
          {cards.map((c) => (
            <RouteCard key={c.id}>
              <RouteTitle $color={c.color}>Rota: {c.id}</RouteTitle>
              <RouteTime $color={c.color}>{c.when}</RouteTime>
              <StoreWrap>
                <StoreIcon />
              </StoreWrap>
              <ShopName>{c.shop}</ShopName>
            </RouteCard>
          ))}
        </CardGrid>
      </Main>

      <FakeScrollbar>
        <ScrollArrow />
        <ScrollThumb />
        <ScrollArrow $down />
      </FakeScrollbar>
    </Shell>
  );
};

export default App;
